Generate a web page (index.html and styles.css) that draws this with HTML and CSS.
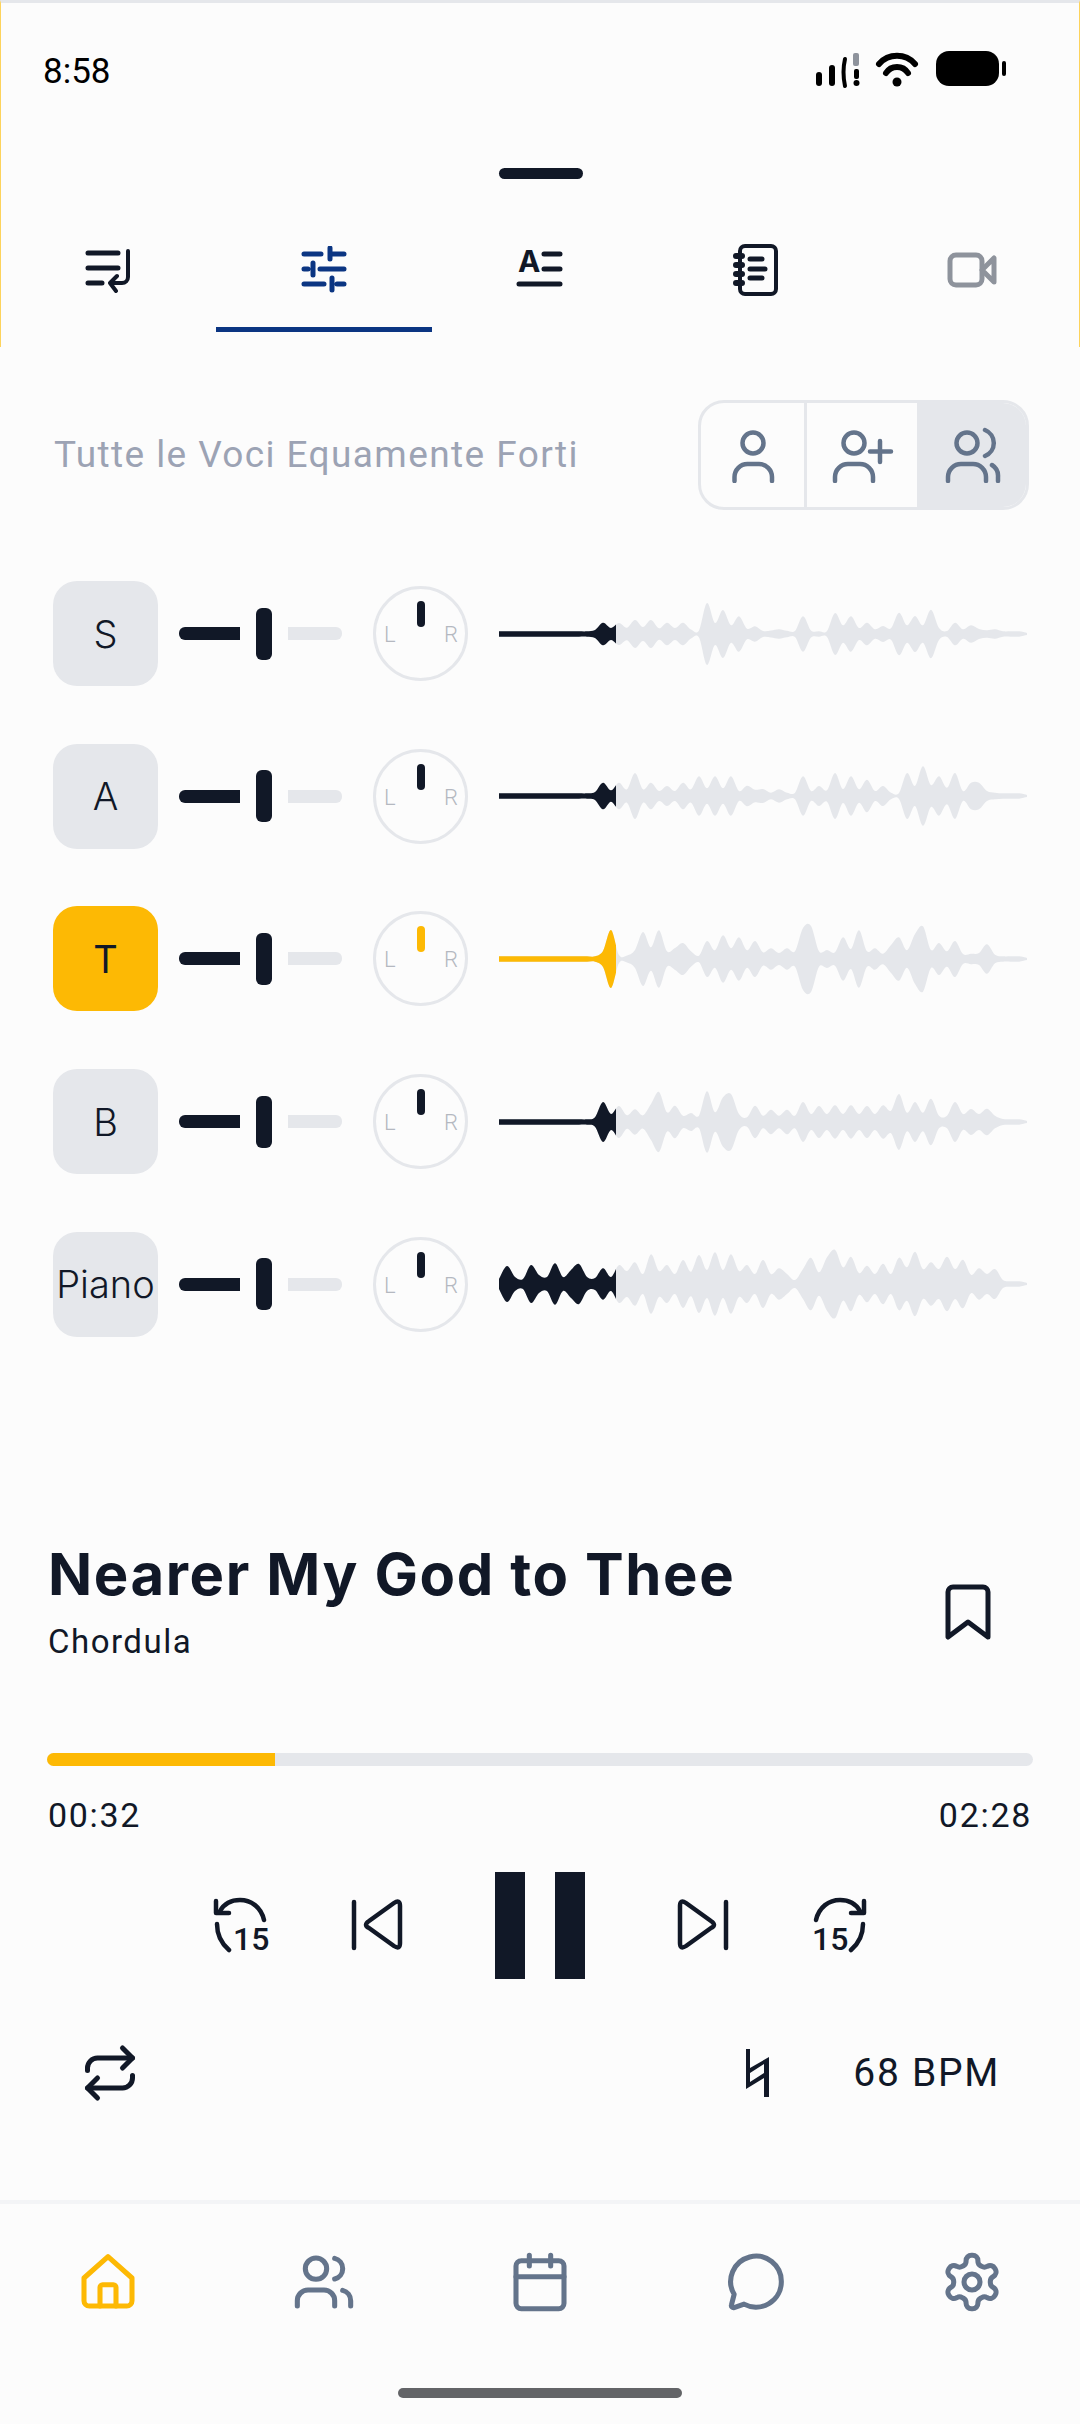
FILE: index.html
```html
<!DOCTYPE html>
<html>
<head>
    <title>Nearer My God to Thee</title>
    <link rel="stylesheet" href="styles.css">
</head>
<body>
<div class="page">
    <div class="header">
        <div class="status">
            <span class="time">8:58</span>
            <svg class="status-icons" width="192" height="40" viewBox="0 0 192 40">
                <rect x="0" y="21" width="6" height="14" rx="3"/>
                <rect x="13" y="14" width="6" height="21" rx="3"/>
                <path d="M29 8 q-3 13 0 27" fill="none" stroke="#000" stroke-width="4" stroke-linecap="round"/>
                <rect x="37" y="2" width="6" height="13" rx="2" fill="#8e939c"/>
                <rect x="38" y="18" width="5" height="10" rx="2"/>
                <circle cx="40.500" cy="32" r="3"/>
                <path d="M63 13 a24 24 0 0 1 36 0" fill="none" stroke="#000" stroke-width="6" stroke-linecap="round"/>
                <path d="M70 22 a13 13 0 0 1 22 0" fill="none" stroke="#000" stroke-width="6" stroke-linecap="round"/>
                <circle cx="81" cy="31" r="4.500"/>
                <rect x="120" y="0" width="63" height="35" rx="13"/>
                <rect x="186" y="10" width="4" height="15" rx="2"/>
            </svg>
        </div>
        <div class="handle"></div>
        <div class="tabs">
            <div class="tab">
                <svg width="48" height="48" viewBox="0 0 48 48" fill="none" stroke="#111827" stroke-width="5" stroke-linecap="round" stroke-linejoin="round">
                    <path d="M4 7H34M4 22H34M4 37H18"/>
                    <path d="M44 5V31a6 6 0 0 1-6 6H27M33 30l-7 7 6 8" stroke-width="4"/>
                </svg>
            </div>
            <div class="tab tab-active">
                <svg width="48" height="48" viewBox="0 0 48 48" fill="none" stroke="#0b3582" stroke-width="5" stroke-linecap="round">
                    <path d="M4 8H21M30 8H44M30 2V13" />
                    <path d="M4 23H8M20 23H44M13 17V29"/>
                    <path d="M4 38H24M37 38H44M32 32V44"/>
                </svg>
            </div>
            <div class="tab">
                <div class="text-icon">
                    <span class="tab-letter">A</span>
                    <svg width="48" height="48" viewBox="0 0 48 48" fill="none">
                        <path d="M28 8H44M28 23H44M3 38H44" stroke="#111827" stroke-width="5" stroke-linecap="round"/>
                    </svg>
                </div>
            </div>
            <div class="tab">
                <svg class="icon-notes" width="48" height="52" viewBox="0 0 48 52" fill="none" stroke="#111827" stroke-width="4" stroke-linecap="round" stroke-linejoin="round">
                    <rect x="9" y="2" width="36" height="48" rx="5"/>
                    <path d="M5 12H11M5 21H11M5 30H11M5 39H11" stroke-width="6"/>
                    <path d="M19 15H31M19 25H34M19 34H31" stroke-width="5"/>
                </svg>
            </div>
            <div class="tab">
                <svg width="50" height="40" viewBox="0 0 50 40" fill="none" stroke="#8e939c" stroke-width="5" stroke-linejoin="round">
                    <rect x="3" y="5" width="32" height="30" rx="6"/>
                    <path d="M35 20L47 8V32Z"/>
                </svg>
            </div>
        </div>
    </div>

    <div class="preset-bar">
        <div class="preset-name">Tutte le Voci Equamente Forti</div>
        <div class="seg">
            <div class="seg-item seg-first">
                <svg width="56" height="56" viewBox="0 0 56 56" fill="none" stroke="#64748b" stroke-width="4.500" stroke-linecap="round">
                    <circle cx="28" cy="16" r="10.500"/>
                    <path d="M9.500 54V50a13 13 0 0 1 13-13H34a13 13 0 0 1 13 13V54"/>
                </svg>
            </div>
            <div class="seg-item seg-second">
                <svg width="64" height="56" viewBox="0 0 64 56" fill="none" stroke="#64748b" stroke-width="4.500" stroke-linecap="round">
                    <circle cx="24" cy="16" r="10.500"/>
                    <path d="M5 54V50a13 13 0 0 1 13-13H30a13 13 0 0 1 13 13V54"/>
                    <path d="M50 14V35M40 24.500H61"/>
                </svg>
            </div>
            <div class="seg-item seg-on">
                <svg width="64" height="56" viewBox="0 0 64 56" fill="none" stroke="#64748b" stroke-width="4.500" stroke-linecap="round">
                    <circle cx="26" cy="16" r="10.500"/>
                    <path d="M7 54V50a13 13 0 0 1 13-13H32a13 13 0 0 1 13 13V54"/>
                    <path d="M44 3a14 14 0 0 1 0 26M51 38a13 13 0 0 1 6 12V54"/>
                </svg>
            </div>
        </div>
    </div>

    <div class="mixer">
        <div class="track">
            <div class="voice">S</div>
            <div class="fader"><span class="fader-on"></span><span class="fader-knob"></span><span class="fader-off"></span></div>
            <div class="pan"><span class="pan-l">L</span><span class="pan-tick"></span><span class="pan-r">R</span></div>
            <svg class="wave" data-track="s" width="532" height="80" viewBox="0 0 532 80"></svg>
        </div>
        <div class="track">
            <div class="voice">A</div>
            <div class="fader"><span class="fader-on"></span><span class="fader-knob"></span><span class="fader-off"></span></div>
            <div class="pan"><span class="pan-l">L</span><span class="pan-tick"></span><span class="pan-r">R</span></div>
            <svg class="wave" data-track="a" width="532" height="80" viewBox="0 0 532 80"></svg>
        </div>
        <div class="track track-solo">
            <div class="voice">T</div>
            <div class="fader"><span class="fader-on"></span><span class="fader-knob"></span><span class="fader-off"></span></div>
            <div class="pan"><span class="pan-l">L</span><span class="pan-tick"></span><span class="pan-r">R</span></div>
            <svg class="wave" data-track="t" width="532" height="80" viewBox="0 0 532 80"></svg>
        </div>
        <div class="track">
            <div class="voice">B</div>
            <div class="fader"><span class="fader-on"></span><span class="fader-knob"></span><span class="fader-off"></span></div>
            <div class="pan"><span class="pan-l">L</span><span class="pan-tick"></span><span class="pan-r">R</span></div>
            <svg class="wave" data-track="b" width="532" height="80" viewBox="0 0 532 80"></svg>
        </div>
        <div class="track">
            <div class="voice">Piano</div>
            <div class="fader"><span class="fader-on"></span><span class="fader-knob"></span><span class="fader-off"></span></div>
            <div class="pan"><span class="pan-l">L</span><span class="pan-tick"></span><span class="pan-r">R</span></div>
            <svg class="wave" data-track="p" width="532" height="80" viewBox="0 0 532 80"></svg>
        </div>
    </div>

    <div class="song">
        <div>
            <div class="song-title">Nearer My God to Thee</div>
            <div class="song-artist">Chordula</div>
        </div>
        <svg class="bookmark" width="46" height="56" viewBox="0 0 46 56" fill="none" stroke="#111827" stroke-width="5" stroke-linejoin="round">
            <path d="M3 8a5 5 0 0 1 5-5H38a5 5 0 0 1 5 5V53L23 38 3 53Z"/>
        </svg>
    </div>

    <div class="progress"><div class="progress-fill"></div></div>
    <div class="times"><span>00:32</span><span>02:28</span></div>

    <div class="controls">
        <div class="skip">
            <svg width="56" height="56" viewBox="0 0 56 56" fill="none" stroke="#111827" stroke-width="4.500" stroke-linecap="round" stroke-linejoin="round">
                <path d="M51 23C48 10 38 3 27 3 18 3 11 7 7 14"/>
                <path d="M3 4V16H16"/>
                <path d="M4 27C4 38 9 47 16 53"/>
            </svg>
            <span class="skip-num skip-num-back">15</span>
        </div>
        <svg width="56" height="56" viewBox="0 0 56 56" fill="none" stroke="#111827" stroke-width="4.500" stroke-linecap="round" stroke-linejoin="round">
            <path d="M4 5V51"/>
            <path d="M50 9V46Q50 53 44 49L19 31Q13 28 19 24L44 6Q50 2 50 9Z"/>
        </svg>
        <div class="pause"><span></span><span></span></div>
        <svg width="56" height="56" viewBox="0 0 56 56" fill="none" stroke="#111827" stroke-width="4.500" stroke-linecap="round" stroke-linejoin="round">
            <path d="M52 5V51"/>
            <path d="M6 9V46Q6 53 12 49L37 31Q43 28 37 24L12 6Q6 2 6 9Z"/>
        </svg>
        <div class="skip">
            <svg width="56" height="56" viewBox="0 0 56 56" fill="none" stroke="#111827" stroke-width="4.500" stroke-linecap="round" stroke-linejoin="round">
                <path d="M5 23C8 10 18 3 29 3 38 3 45 7 49 14"/>
                <path d="M53 4V16H40"/>
                <path d="M52 27C52 38 47 47 40 53"/>
            </svg>
            <span class="skip-num skip-num-fwd">15</span>
        </div>
    </div>

    <div class="options">
        <svg width="60" height="60" viewBox="0 0 24 24" fill="none" stroke="#111827" stroke-width="2" stroke-linecap="round" stroke-linejoin="round">
            <path d="M17 2l4 4-4 4"/>
            <path d="M3 11V10a4 4 0 0 1 4-4H21"/>
            <path d="M7 22l-4-4 4-4"/>
            <path d="M21 13v1a4 4 0 0 1-4 4H3"/>
        </svg>
        <div class="tempo">
            <svg width="24" height="48" viewBox="0 0 24 48" fill="#111827">
                <path d="M0 0H4V19L23 8V48H18V29L0 40ZM4 24V33L18 24V15Z" fill-rule="evenodd"/>
            </svg>
            <span class="bpm">68 BPM</span>
        </div>
    </div>

    <div class="nav">
        <div class="nav-icons">
            <svg width="64" height="64" viewBox="0 0 24 24" fill="none" stroke="#fdb904" stroke-width="1.900" stroke-linecap="round" stroke-linejoin="round">
                <path d="M3 10.500L12 2.500l9 8V19a2 2 0 0 1-2 2H5a2 2 0 0 1-2-2Z"/>
                <path d="M9 21V14a1 1 0 0 1 1-1h4a1 1 0 0 1 1 1v7"/>
            </svg>
            <svg width="64" height="64" viewBox="0 0 24 24" fill="none" stroke="#64748b" stroke-width="1.900" stroke-linecap="round" stroke-linejoin="round">
                <path d="M16 21v-2a4 4 0 0 0-4-4H6a4 4 0 0 0-4 4v2"/>
                <circle cx="9" cy="7" r="4"/>
                <path d="M22 21v-2a4 4 0 0 0-3-3.870"/>
                <path d="M16 3.130a4 4 0 0 1 0 7.750"/>
            </svg>
            <svg width="64" height="64" viewBox="0 0 24 24" fill="none" stroke="#64748b" stroke-width="1.900" stroke-linecap="round" stroke-linejoin="round">
                <rect x="3" y="4" width="18" height="18" rx="2"/>
                <path d="M16 2v4M8 2v4M3 10h18"/>
            </svg>
            <svg width="64" height="64" viewBox="0 0 24 24" fill="none" stroke="#64748b" stroke-width="1.900" stroke-linecap="round" stroke-linejoin="round">
                <path d="M21.500 12a9.500 9.500 0 0 1-14 8.300l-3.700 1.300a.8 .8 0 0 1-1-1l1-4A9.500 9.500 0 1 1 21.500 12Z"/>
            </svg>
            <svg width="64" height="64" viewBox="0 0 24 24" fill="none" stroke="#64748b" stroke-width="1.900" stroke-linecap="round" stroke-linejoin="round">
                <path d="M12.220 2h-.44a2 2 0 0 0-2 2v.18a2 2 0 0 1-1 1.730l-.43.25a2 2 0 0 1-2 0l-.15-.08a2 2 0 0 0-2.730.73l-.22.38a2 2 0 0 0 .73 2.730l.15.1a2 2 0 0 1 1 1.720v.51a2 2 0 0 1-1 1.740l-.15.09a2 2 0 0 0-.73 2.730l.22.38a2 2 0 0 0 2.730.73l.15-.08a2 2 0 0 1 2 0l.43.25a2 2 0 0 1 1 1.730V20a2 2 0 0 0 2 2h.44a2 2 0 0 0 2-2v-.18a2 2 0 0 1 1-1.730l.43-.25a2 2 0 0 1 2 0l.15.08a2 2 0 0 0 2.730-.73l.22-.39a2 2 0 0 0-.73-2.730l-.15-.08a2 2 0 0 1-1-1.740v-.5a2 2 0 0 1 1-1.740l.15-.09a2 2 0 0 0 .73-2.730l-.22-.38a2 2 0 0 0-2.730-.73l-.15.08a2 2 0 0 1-2 0l-.43-.25a2 2 0 0 1-1-1.730V4a2 2 0 0 0-2-2z"/>
                <circle cx="12" cy="12" r="3"/>
            </svg>
        </div>
        <div class="home-bar"></div>
    </div>
</div>
<script src="script.js"></script>
</body>
</html>
```

FILE: styles.css
```css
* {
    padding: 0;
    margin: 0;
    box-sizing: border-box;
}

body {
    background-color: #fcfcfc;
    font-family: Roboto, sans-serif;
    color: #111827;
}

svg {
    display: block;
    flex: none;
}

.page {
    width: 1080px;
    height: 2424px;
    display: flex;
    flex-direction: column;
    overflow: hidden;
}

/* top sheet */
.header {
    height: 347px;
    border-top: 3px solid #e5e7eb;
    border-left: 1px solid #fdd35c;
    border-right: 1px solid #fdd35c;
}

.status {
    display: flex;
    justify-content: space-between;
    align-items: flex-start;
    height: 165px;
    padding: 48px 71px 0 42px;
}

.time {
    font-family: Roboto, sans-serif;
    font-size: 35px;
    line-height: 41px;
    color: #000;
}

.handle {
    width: 84px;
    height: 11px;
    margin-left: 498px;
    border-radius: 6px;
    background-color: #111827;
}

.tabs {
    display: grid;
    grid-template-columns: repeat(5, 216px);
    margin: 33px 0 0 -1px;
}

.tab {
    height: 120px;
    display: flex;
    justify-content: center;
    align-items: center;
    border-bottom: 5px solid transparent;
}

.tab-active {
    border-bottom-color: #0b3582;
}

.icon-notes {
    margin-left: -3px;
}

.text-icon {
    position: relative;
    width: 48px;
    height: 48px;
}

.tab-letter {
    position: absolute;
    left: 2px;
    top: 0;
    font-family: Inter, sans-serif;
    font-size: 30px;
    font-weight: 700;
    line-height: 30px;
    color: #111827;
}

/* preset row */
.preset-bar {
    display: flex;
    justify-content: space-between;
    align-items: center;
    margin-top: 53px;
    padding: 0 51px 0 54px;
}

.preset-name {
    margin-top: -2px;
    font-size: 37px;
    letter-spacing: 1.400px;
    color: #9ca3b4;
}

.seg {
    display: flex;
    width: 331px;
    height: 110px;
    border: 3px solid #e5e7eb;
    border-radius: 26px;
    overflow: hidden;
}

.seg-item {
    display: flex;
    justify-content: center;
    align-items: center;
    border-right: 3px solid #e5e7eb;
}

.seg-first {
    width: 106px;
}

.seg-second {
    width: 113px;
}

.seg-on {
    flex: 1;
    border-right: none;
    background-color: #e5e7eb;
}

/* mixer rows */
.mixer {
    display: flex;
    flex-direction: column;
    gap: 57.700px;
    margin-top: 71px;
    padding-left: 53px;
}

.track {
    display: flex;
    align-items: center;
    height: 105px;
}

.voice {
    width: 105px;
    height: 105px;
    display: flex;
    justify-content: center;
    align-items: center;
    border-radius: 24px;
    background-color: #e5e7eb;
    font-family: Inter, sans-serif;
    font-size: 38px;
    font-weight: 300;
}

.track-solo .voice {
    background-color: #fdb904;
    font-weight: 400;
}

.fader {
    display: flex;
    align-items: center;
    gap: 16px;
    margin-left: 21px;
}

.fader span {
    display: block;
}

.fader-on {
    width: 61px;
    height: 13px;
    border-radius: 6px 0 0 6px;
    background-color: #111827;
}

.fader-knob {
    width: 16px;
    height: 52px;
    border-radius: 6px;
    background-color: #111827;
}

.fader-off {
    width: 54px;
    height: 13px;
    border-radius: 0 6px 6px 0;
    background-color: #e5e7eb;
}

.pan {
    position: relative;
    width: 95px;
    height: 95px;
    margin-left: 31px;
    border: 3px solid #e5e7eb;
    border-radius: 50%;
}

.pan-tick {
    position: absolute;
    left: 41px;
    top: 12px;
    width: 8px;
    height: 26px;
    border-radius: 4px;
    background-color: #111827;
}

.track-solo .pan-tick {
    background-color: #fdb904;
}

.pan-l,
.pan-r {
    position: absolute;
    top: 33px;
    font-size: 22px;
    font-weight: 300;
    line-height: 26px;
    color: #b4b8c0;
}

.pan-l {
    left: 8px;
}

.pan-r {
    right: 7px;
}

.wave {
    margin-left: 31px;
}

.wave-rest {
    fill: #e5e7eb;
}

.wave-done {
    fill: #111827;
}

.track-solo .wave-done {
    fill: #fdb904;
}

/* song info */
.song {
    display: flex;
    justify-content: space-between;
    align-items: center;
    margin-top: 202px;
    padding: 0 89px 0 48px;
}

.song-title {
    font-family: Inter, sans-serif;
    font-size: 58px;
    font-weight: 700;
    line-height: 70px;
    letter-spacing: 1.600px;
}

.song-artist {
    margin-top: 13px;
    font-size: 33px;
    line-height: 40px;
    letter-spacing: 1.500px;
}

.bookmark {
    margin-top: 23px;
}

.progress {
    height: 13px;
    margin: 91px 47px 0;
    border-radius: 7px;
    background-color: #e5e7eb;
    overflow: hidden;
}

.progress-fill {
    width: 228px;
    height: 13px;
    background-color: #fdb904;
}

.times {
    display: flex;
    justify-content: space-between;
    margin-top: 30px;
    padding: 0 48px;
    font-size: 34px;
    line-height: 38px;
    letter-spacing: 1.700px;
}

/* transport */
.controls {
    display: flex;
    justify-content: center;
    align-items: center;
    gap: 81px;
    height: 107px;
    margin-top: 38px;
}

.skip {
    position: relative;
    width: 56px;
    height: 56px;
}

.skip-num {
    position: absolute;
    top: 29px;
    font-family: Roboto, sans-serif;
    font-size: 32px;
    font-weight: 500;
    line-height: 26px;
    color: #111827;
}

.skip-num-back {
    left: 20px;
}

.skip-num-fwd {
    left: 1px;
}

.pause {
    display: flex;
    gap: 30px;
    margin: 0 8px;
}

.pause span {
    display: block;
    width: 30px;
    height: 107px;
    background-color: #111827;
}

.options {
    display: flex;
    justify-content: space-between;
    align-items: center;
    margin-top: 64px;
    padding: 0 80px;
}

.tempo {
    display: flex;
    align-items: center;
    gap: 83px;
}

.bpm {
    font-size: 39px;
    letter-spacing: 1.700px;
}

/* bottom nav */
.nav {
    margin-top: auto;
    height: 224px;
    border-top: 4px solid #f3f4f6;
    display: flex;
    flex-direction: column;
    align-items: center;
}

.nav-icons {
    display: grid;
    grid-template-columns: repeat(5, 216px);
    justify-items: center;
    margin-top: 46px;
}

.home-bar {
    width: 284px;
    height: 10px;
    margin-top: 74px;
    border-radius: 5px;
    background-color: #636467;
}
```

FILE: script.js
```js
// half heights of each waveform, one value every 8px
const peaks = {
    s: [2.7,2.7,2.7,2.7,2.7,2.7,2.7,2.7,2.7,2.7,2.7,2.7,4,11.3,6,11,6.3,14,7,14,5.7,11.3,6,11.3,4.5,3.5,31,11,24,8.7,17.7,5.3,7.7,3,3.5,4.7,3.2,3,17.7,3.5,2.7,3,21,8.7,17.7,6,11.3,4.7,8,5.7,21.3,8.7,18,8.7,24.3,6,3,11.3,4.7,8.7,5,3.7,4.7,2.7,2.7,2.7,1],
    a: [2.7,2.7,2.7,2.7,2.7,2.7,2.7,2.7,2.7,2.7,2.7,2.7,4,13.3,5.7,13.3,6.7,23,6.7,13.3,5,10,5,13.3,6.7,19.7,7.7,19.7,7.7,19.7,5,10.3,6.3,7,3.3,6.7,3.3,3.3,19.7,5,10,5.7,23,7,19.7,6.7,16.3,5,10,3.3,3,23,10,29.7,11,19.7,8.3,23,5,13.3,13.3,5,3.3,2.7,2.7,2.7,1],
    t: [2.7,2.7,2.7,2.7,2.7,2.7,2.7,2.7,2.7,2.7,2.7,2.7,2.7,8,29,4,3.5,9,27,11.7,28.7,7.7,11,16,7.7,3.3,18,8.7,23.7,10.7,21.7,8.7,18,6.7,10.7,6,10.7,7.7,31,33,7.7,9,6.7,21.7,10,28.7,7.7,10.7,5.3,14,21.7,8.7,25,32.7,9,16,7.7,18,5,5.3,6,14.7,4.3,2.7,2.7,2.7,1],
    b: [2.7,2.7,2.7,2.7,2.7,2.7,2.7,2.7,2.7,2.7,2.7,2.7,4.7,20,8,16,6.7,12.7,6.7,18,30,9.7,16.3,6.3,9,6.3,30.7,9.7,24.7,28,8,4.7,16.3,6.3,12.3,6.3,12.3,6.3,20,8,16,8,16.7,8,16.7,8,16,8,16.7,11.3,28,9.3,20,9.3,23.3,6.3,6.3,20,8,13,8,13.3,6.3,3,2.7,2.7,1],
    p: [5,18,7,5,19,9,7,20.7,7,14,20,7,6,15.7,7,19,13,21.7,10,29.7,13,19,10,24,12.3,29,14,31.7,14,29.7,13,19,10,24,10,15.7,10,4,15,26.3,11.7,26.7,34.3,16.7,27.3,11,18.3,10,20.3,10,26.3,16.7,32.3,15,21.7,15,27.3,15,24.3,9.3,15.7,10,15,4,2.7,2.7,1]
};

// smooth curve through the points, mirrored around the middle line
function wavePath(values) {
    const mid = 40;
    const top = values.map((v, i) => [i * 8, mid - v]);
    const bottom = values.map((v, i) => [i * 8, mid + v]).reverse();
    let d = 'M' + top[0][0] + ' ' + top[0][1];
    d += curve(top);
    d += 'L' + bottom[0][0] + ' ' + bottom[0][1];
    d += curve(bottom);
    return d + 'Z';
}

function curve(pts) {
    let d = '';
    for (let i = 0; i < pts.length - 1; i++) {
        const p0 = pts[Math.max(i - 1, 0)];
        const p1 = pts[i];
        const p2 = pts[i + 1];
        const p3 = pts[Math.min(i + 2, pts.length - 1)];
        const c1x = p1[0] + (p2[0] - p0[0]) / 6;
        const c1y = p1[1] + (p2[1] - p0[1]) / 6;
        const c2x = p2[0] - (p3[0] - p1[0]) / 6;
        const c2y = p2[1] - (p3[1] - p1[1]) / 6;
        d += 'C' + c1x + ' ' + c1y + ' ' + c2x + ' ' + c2y + ' ' + p2[0] + ' ' + p2[1];
    }
    return d;
}

document.querySelectorAll('.wave').forEach(svg => {
    const name = svg.dataset.track;
    const d = wavePath(peaks[name]);
    svg.innerHTML =
        '<clipPath id="played-' + name + '"><rect width="117" height="80"/></clipPath>' +
        '<path class="wave-rest" d="' + d + '"/>' +
        '<path class="wave-done" clip-path="url(#played-' + name + ')" d="' + d + '"/>';
});
```
